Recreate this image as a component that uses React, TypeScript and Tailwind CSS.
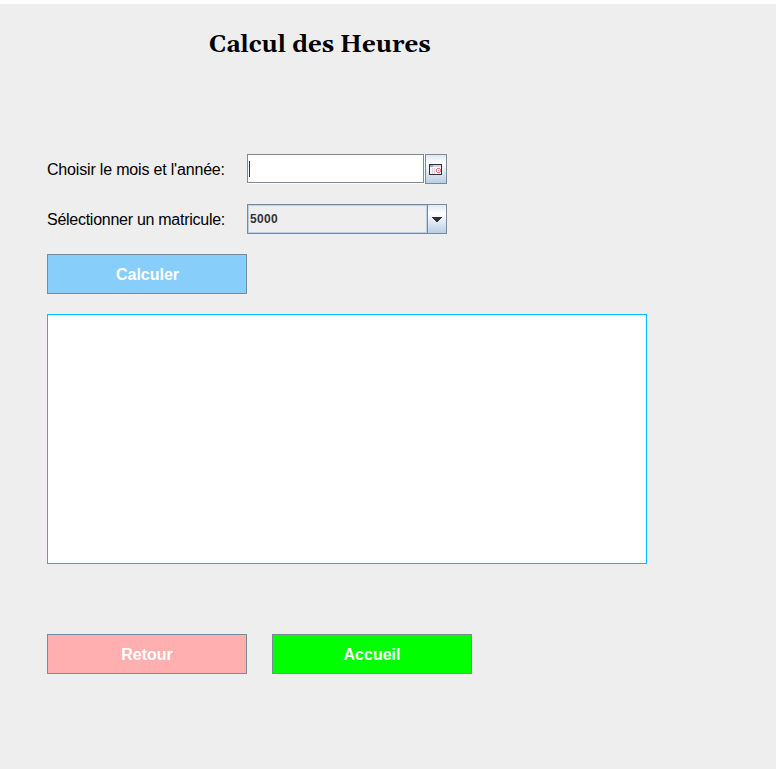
import React from "react";

function CalendarIcon() {
  return (
    <svg width="14" height="12" viewBox="0 0 14 12" shapeRendering="crispEdges" className="mt-px">
      <rect x="0.5" y="0.5" width="12" height="10" fill="#f7f5f5" stroke="#333333" />
      <path d="M1 1h3v2h-3z" fill="#8fa9dc" />
      <path d="M4 1h8v1h-8z" fill="#f3c89c" />
      <path d="M4 2h8v1h-8z" fill="#dcdce4" />
      <path d="M3.5 4v6M5.5 4v6" stroke="#d6d6d6" />
      <path d="M8 4h3v1h-3zM7 5h1v3h-1zM11 5h1v3h-1zM8 8h3v1h-3z" fill="#f0757a" />
      <path d="M9 6h1v1h-1z" fill="#f0a0a4" />
    </svg>
  );
}

function Button({ label, className }: { label: string; className: string }) {
  return (
    <button
      className={`flex h-10 w-[200px] items-center justify-center border border-[#7a8a99] pt-px text-base font-bold text-white ${className}`}
    >
      <span>{label}</span>
    </button>
  );
}

export default function App() {
  return (
    <div className="h-[769px] w-[776px] overflow-hidden border-t-4 border-white bg-[#eeeeee] font-['Liberation_Sans',Arial,sans-serif] text-base text-black">
      <h1 className="ml-[209px] mt-[26px] h-[30px] whitespace-nowrap font-[Georgia,Gelasio,'Liberation_Serif',serif] text-2xl font-bold leading-[30px]">
        Calcul des Heures
      </h1>
      <main className="ml-[47px] mt-[94px] flex w-[600px] flex-col">
        <div className="flex h-[30px]">
          <label className="w-[200px] whitespace-nowrap leading-[31px] tracking-[-0.18px]">Choisir le mois et l'année:</label>
          <div className="flex h-[30px] w-[178px] border-b border-r border-white">
            <div className="flex h-[29px] w-[177px] border border-[#7a8a99] bg-white pl-px pt-[6px]">
              <div className="h-4 w-px bg-[#333333]" />
            </div>
          </div>
          <button className="flex h-[30px] w-[22px] items-center justify-center border border-[#7a8a99] bg-linear-to-b from-[#dde8f3] via-white via-30% to-[#b8cfe5]">
            <CalendarIcon />
          </button>
        </div>
        <div className="mt-5 flex h-[30px]">
          <label className="w-[200px] whitespace-nowrap leading-[31px] tracking-[-0.27px]">Sélectionner un matricule:</label>
          <div className="flex h-[30px] w-[200px] border border-[#7a8a99]">
            <div className="w-[179px] border border-[#b8cfe5] pl-px text-[12px] font-bold leading-[26px] text-[#333333] tracking-[0.33px]">
              5000
            </div>
            <div className="flex w-[19px] items-center justify-center border-l border-[#7a8a99] bg-linear-to-b from-[#dde8f3] via-white via-30% to-[#b8cfe5]">
              <svg width="10" height="5" viewBox="0 0 10 5" shapeRendering="crispEdges" className="mt-px">
                <path d="M0 0h10v1h-1v1h-1v1h-1v1h-1v1h-2v-1h-1v-1h-1v-1h-1v-1h-1z" fill="#333333" />
              </svg>
            </div>
          </div>
        </div>
        <Button label="Calculer" className="mt-5 bg-[#87cefa] pl-px" />
        <div className="mt-5 h-[250px] w-[600px] border border-[#00bfff] bg-white" />
        <div className="mt-[70px] flex gap-[25px]">
          <Button label="Retour" className="bg-[#ffafaf]" />
          <Button label="Accueil" className="bg-[#00ff00]" />
        </div>
      </main>
    </div>
  );
}
